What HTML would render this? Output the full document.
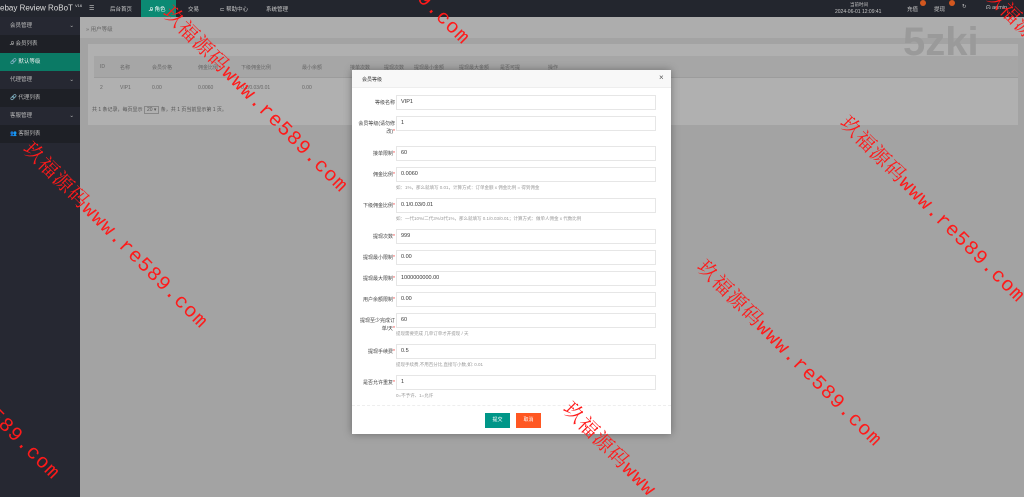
<!DOCTYPE html>
<html style="overflow:hidden;width:1024px;height:497px"><head><meta charset="utf-8"><style>
*{margin:0;padding:0;box-sizing:border-box}
body{width:1024px;height:497px;overflow:hidden;background:#a3a3a3;font-family:"Liberation Sans","Noto Sans CJK SC",sans-serif;font-size:5.5px;color:#555;position:relative}
.a{position:absolute}
.hdr{left:0;top:0;width:1024px;height:17px;background:#23262e;color:#c8c8c8}
.side{left:0;top:17px;width:80px;height:480px;background:#262832;color:#bbb}
.side div{position:absolute;left:0;width:80px;height:18px;line-height:18px;padding-left:10px}
.tbl{left:88px;top:44px;width:930px;height:81px;background:#b0b0b0}
.tbl span{position:absolute;font-size:5px;color:#666}
.modal{left:352px;top:70px;width:319px;height:364px;background:#fff;box-shadow:0 0 8px rgba(0,0,0,.35)}
.lab{position:absolute;right:276px;text-align:right;font-size:5px;color:#444;line-height:8px;width:40px}
.lab i{color:#e33;font-style:normal}
.inp{position:absolute;left:44px;width:260px;height:15px;border:1px solid #e6e6e6;padding-left:4px;line-height:13px;font-size:5.5px;color:#333}
.hint{position:absolute;left:44px;font-size:4.5px;color:#999}
.wm{position:absolute;transform-origin:0 0;transform:rotate(45deg);color:#ff1a1a;font-family:"Liberation Mono","Noto Serif CJK SC",serif;font-size:20px;white-space:nowrap;letter-spacing:1px}
.wrap{position:absolute;left:0;top:0;width:1024px;height:497px;overflow:hidden}
</style></head><body><div class="wrap">
<div class="a hdr">
<div class="a" style="left:0;top:3px;font-size:8px;color:#ddd">ebay Review RoBoT <sup style="font-size:4px">V16</sup></div>
<div class="a" style="left:89px;top:5px;font-size:6px">☰</div>
<div class="a" style="left:110px;top:5px">后台首页</div>
<div class="a" style="left:141px;top:0;width:35px;height:17px;background:#0b8a73"></div>
<div class="a" style="left:149px;top:5px;color:#fff">Ꭿ 角色</div>
<div class="a" style="left:188px;top:5px">交易</div>
<div class="a" style="left:220px;top:5px">⊏ 帮助中心</div>
<div class="a" style="left:266px;top:5px">系统管理</div>
<div class="a" style="left:850px;top:2px;font-size:4.5px">当前时间</div>
<div class="a" style="left:835px;top:9px;font-size:5px">2024-06-01 12:09:41</div>
<div class="a" style="left:907px;top:5px">充值</div>
<div class="a" style="left:920px;top:0;width:6px;height:6px;border-radius:3px;background:#d2571f"></div>
<div class="a" style="left:934px;top:5px">提现</div>
<div class="a" style="left:949px;top:0;width:6px;height:6px;border-radius:3px;background:#d2571f"></div>
<div class="a" style="left:962px;top:4px">↻</div>
<div class="a" style="left:986px;top:5px">ᗣ admin</div>
</div>
<div class="a side">
<div style="top:0">会员管理<span style="position:absolute;right:6px">⌄</span></div>
<div style="top:18px;background:#1e2026;padding-left:10px">Ꭿ 会员列表</div>
<div style="top:36px;background:#0b7a65;color:#eee">🔗 默认等级</div>
<div style="top:54px">代理管理<span style="position:absolute;right:6px">⌄</span></div>
<div style="top:72px;background:#1e2026">🔗 代理列表</div>
<div style="top:90px">客服管理<span style="position:absolute;right:6px">⌄</span></div>
<div style="top:108px;background:#1e2026">👥 客服列表</div>
</div>
<div class="a" style="left:80px;top:17px;width:944px;height:21px;background:#adadad"></div>
<div class="a" style="left:86px;top:25px;color:#666">» 用户等级</div>
<div class="a tbl">
<div class="a" style="left:6px;top:12px;width:924px;height:21px;background:#a6a6a6"></div>
<div class="a" style="left:6px;top:33px;width:924px;height:1px;background:#9c9c9c"></div>
<span style="left:12px;top:20px">ID</span><span style="left:32px;top:20px">名称</span><span style="left:64px;top:20px">会员价格</span><span style="left:110px;top:20px">佣金比例</span><span style="left:153px;top:20px">下级佣金比例</span><span style="left:214px;top:20px">最小余额</span><span style="left:262px;top:20px">接单次数</span><span style="left:296px;top:20px">提现次数</span><span style="left:326px;top:20px">提现最小金额</span><span style="left:371px;top:20px">提现最大金额</span><span style="left:412px;top:20px">是否可提</span><span style="left:460px;top:20px">操作</span>
<span style="left:12px;top:41px">2</span><span style="left:32px;top:41px">VIP1</span><span style="left:64px;top:41px">0.00</span><span style="left:110px;top:41px">0.0060</span><span style="left:153px;top:41px">0.1/0.03/0.01</span><span style="left:214px;top:41px">0.00</span>
</div>
<div class="a" style="left:903px;top:22px;font-size:40px;font-weight:bold;color:#9a9a9a;line-height:40px">5zki</div>
<div class="a" style="left:92px;top:106px;font-size:5px;color:#555">共 1 条记录，每页显示 <span style="border:1px solid #888;padding:0 2px">20 ▾</span> 条，共 1 页当前显示第 1 页。</div>

<div class="a modal">
<div class="a" style="left:0;top:0;width:319px;height:18px;background:#f8f8f8;border-bottom:1px solid #eee"></div>
<div class="a" style="left:10px;top:6px;font-size:5px;color:#333">会员等级</div>
<div class="a" style="left:307px;top:3px;font-size:8px;color:#555">×</div>

<div class="lab" style="top:29px">等级名称</div><div class="inp" style="top:25px">VIP1</div>
<div class="lab" style="top:50px">会员等级(请勿修改)<i>*</i></div><div class="inp" style="top:46px">1</div>
<div class="lab" style="top:80px">接单限制<i>*</i></div><div class="inp" style="top:76px">60</div>
<div class="lab" style="top:101px">佣金比例<i>*</i></div><div class="inp" style="top:97px">0.0060</div>
<div class="hint" style="top:115px">如：1%，那么就填写 0.01，计算方式：订单金额 x 佣金比例 = 得到佣金</div>
<div class="lab" style="top:132px">下级佣金比例<i>*</i></div><div class="inp" style="top:128px">0.1/0.03/0.01</div>
<div class="hint" style="top:146px">如：一代10%/二代3%/3代1%，那么就填写 0.1/0.03/0.01；计算方式：做单人佣金 x 代数比例</div>
<div class="lab" style="top:163px">提现次数<i>*</i></div><div class="inp" style="top:159px">999</div>
<div class="lab" style="top:184px">提现最小限制<i>*</i></div><div class="inp" style="top:180px">0.00</div>
<div class="lab" style="top:205px">提现最大限制<i>*</i></div><div class="inp" style="top:201px">1000000000.00</div>
<div class="lab" style="top:226px">用户余额限制<i>*</i></div><div class="inp" style="top:222px">0.00</div>
<div class="lab" style="top:247px">提现至少完成订单/天<i>*</i></div><div class="inp" style="top:243px">60</div>
<div class="hint" style="top:261px">提现需要完成 几单订单才开提现 / 天</div>
<div class="lab" style="top:278px">提现手续费<i>*</i></div><div class="inp" style="top:274px">0.5</div>
<div class="hint" style="top:292px">提现手续费,不用百分比,直接写小数,如: 0.01</div>
<div class="lab" style="top:309px">是否允许重复<i>*</i></div><div class="inp" style="top:305px">1</div>
<div class="hint" style="top:323px">0=不予许、1=允许</div>
<div class="a" style="left:0;top:335px;width:319px;border-top:1px dashed #eee"></div>
<div class="a" style="left:133px;top:343px;width:25px;height:15px;background:#009688;color:#fff;text-align:center;line-height:15px;font-size:5px">提交</div>
<div class="a" style="left:164px;top:343px;width:25px;height:15px;background:#ff5722;color:#fff;text-align:center;line-height:15px;font-size:5px">取消</div>
</div>

<div class="wm" style="left:178px;top:-2px">玖福源码www.re589.com</div>
<div class="wm" style="left:300px;top:-150px">玖福源码www.re589.com</div>
<div class="wm" style="left:38px;top:134px">玖福源码www.re589.com</div>
<div class="wm" style="left:-110px;top:285px">玖福源码www.re589.com</div>
<div class="wm" style="left:855px;top:108px">玖福源码www.re589.com</div>
<div class="wm" style="left:712px;top:252px">玖福源码www.re589.com</div>
<div class="wm" style="left:578px;top:394px">玖福源码www.re589.com</div>
<div class="wm" style="left:1000px;top:-20px">玖福源码www.re589.com</div>
</div></body></html>
